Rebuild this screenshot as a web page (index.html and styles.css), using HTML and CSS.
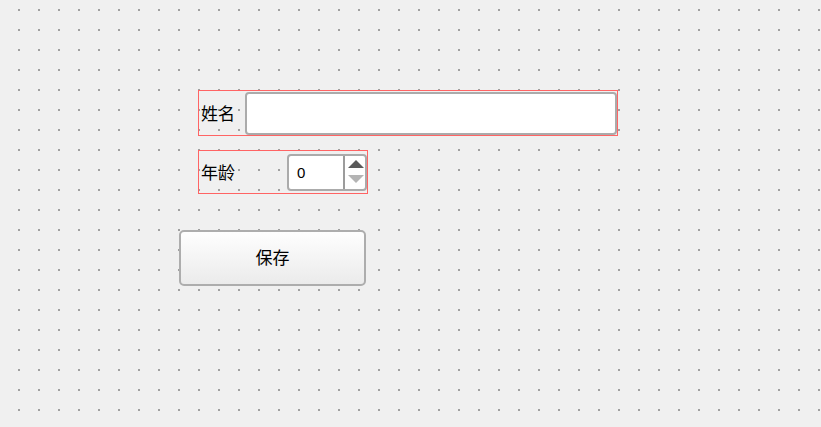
FILE: index.html
```html
<!DOCTYPE html>
<html lang="zh">
<head>
<meta charset="utf-8">
<title>Form</title>
<link rel="stylesheet" href="styles.css">
</head>
<body>
<div class="canvas">
  <div class="form">
    <div class="row row-name">
      <span class="label">姓名</span>
      <div class="lineedit"></div>
    </div>
    <div class="row row-age">
      <span class="label">年龄</span>
      <div class="spinbox">
        <span class="value">0</span>
        <div class="arrows">
          <svg width="16" height="28" viewBox="0 0 16 28">
            <polygon points="0,10 8,2 16,10" fill="#5a5a5a"/>
            <polygon points="0,17 16,17 8,25" fill="#b4b4b4"/>
          </svg>
        </div>
      </div>
    </div>
    <button class="btn">保存</button>
  </div>
</div>
</body>
</html>
```
FILE: styles.css
```css
html, body {
  margin: 0;
  padding: 0;
  background: #f0f0f0;
}
.canvas {
  width: 821px;
  height: 427px;
  overflow: hidden;
  background-color: #f0f0f0;
  background-image: conic-gradient(from 270deg at 2px 2px, #a0a0a0 90deg, transparent 0);
  background-size: 20px 20px;
  background-position: 18px 9px;
  font-family: "Noto Sans CJK SC", "Noto Sans", sans-serif;
}
.form {
  display: flex;
  flex-direction: column;
  align-items: flex-start;
  padding: 90px 0 0 179px;
}
.row {
  box-sizing: border-box;
  margin-left: 19px;
  border: 1px solid #ff6464;
  display: flex;
  align-items: center;
  justify-content: space-between;
  padding-left: 2px;
}
.label {
  font-size: 17px;
  line-height: 20px;
  color: #000;
}
.row-name {
  width: 420px;
  height: 46px;
}
.lineedit {
  box-sizing: border-box;
  width: 372px;
  height: 43px;
  background: #fff;
  border: 2px solid #ababab;
  border-radius: 4px;
}
.row-age {
  width: 170px;
  height: 44px;
  margin-top: 14px;
}
.spinbox {
  box-sizing: border-box;
  width: 80px;
  height: 37px;
  background: #fff;
  border: 2px solid #ababab;
  border-radius: 4px;
  display: flex;
  align-items: stretch;
}
.value {
  flex: 1;
  display: flex;
  align-items: center;
  padding-left: 8px;
  font-family: "Liberation Sans", "Noto Sans", sans-serif;
  font-size: 15px;
  color: #000;
}
.arrows {
  width: 19px;
  border-left: 2px solid #9c9c9c;
  display: flex;
  align-items: center;
  justify-content: center;
  padding-left: 1px;
}
.arrows svg {
  display: block;
}
.btn {
  box-sizing: border-box;
  margin-top: 36px;
  width: 187px;
  height: 56px;
  border: 2px solid #adadad;
  border-radius: 5px;
  background: linear-gradient(to bottom, #fefefe, #ebebeb);
  font-family: "Noto Sans CJK SC", "Noto Sans", sans-serif;
  font-size: 17px;
  color: #000;
  padding: 0 0 3px 0;
}
```
